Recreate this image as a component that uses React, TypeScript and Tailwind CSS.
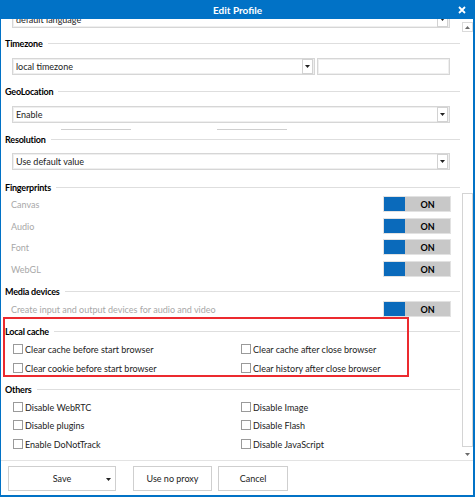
import React from "react";

const font = { fontFamily: "Lato, 'Noto Sans', sans-serif" };

function Arrow() {
  return (
    <svg width="5" height="3" viewBox="0 0 5 3" className="block">
      <path d="M0 0 H5 L2.5 3 Z" fill="#222" />
    </svg>
  );
}

function DropBtn() {
  return (
    <div className="w-[11px] h-[15px] mr-[1px] border border-[#d2d2d2] bg-white flex items-center justify-center shrink-0">
      <Arrow />
    </div>
  );
}

function Select({ text, className = "" }: { text: string; className?: string }) {
  return (
    <div
      className={
        "h-[17px] border border-[#d6d6d6] shadow-[inset_0_0_0_1px_#efefef] bg-white flex items-center pl-[3px] " +
        className
      }
    >
      <span className="flex-1 text-[9px] text-[#222] leading-none">{text}</span>
      <DropBtn />
    </div>
  );
}

function Header({ title, className = "" }: { title: string; className?: string }) {
  return (
    <div className={"h-[16px] flex items-center pl-[4px] pr-[2px] " + className}>
      <span className="text-[9px] font-bold text-black leading-none tracking-[-0.2px]">{title}</span>
      <div className="flex-1 h-px bg-[#dedede] ml-[5px]" />
    </div>
  );
}

function Switch() {
  return (
    <div className="flex h-[16px] w-[68px] border border-[#e2e2e2]">
      <div className="w-[21px] bg-[#0a6abb]" />
      <div className="flex-1 bg-[#c8c8c8] flex items-center justify-center text-[9px] font-bold text-black leading-none">
        ON
      </div>
    </div>
  );
}

function FpRow({ label, className = "" }: { label: string; className?: string }) {
  return (
    <div className={"h-[16px] flex items-center justify-between pl-[10px] pr-[11px] " + className}>
      <span className="text-[9px] text-[#a8a8a8] leading-none">{label}</span>
      <Switch />
    </div>
  );
}

function Check({ label }: { label: string }) {
  return (
    <div className="flex items-center gap-[2px] h-[14px]">
      <div className="w-[10px] h-[10px] border border-[#9a9a9a] bg-white shrink-0" />
      <span className="text-[9px] text-[#222] leading-none">{label}</span>
    </div>
  );
}

function CheckRow({ a, b, className = "" }: { a: string; b?: string; className?: string }) {
  return (
    <div className={"grid grid-cols-[228px_1fr] pl-[12px] " + className}>
      <Check label={a} />
      {b ? <Check label={b} /> : <div />}
    </div>
  );
}

function Button({ children, className = "" }: { children: React.ReactNode; className?: string }) {
  return (
    <div
      className={
        "h-[25px] border border-[#cfcfcf] bg-white flex items-center justify-center text-[9px] text-[#222] " +
        className
      }
    >
      {children}
    </div>
  );
}

export default function App() {
  return (
    <div className="w-[475px] h-[497px] flex flex-col bg-[#0172c6]" style={font}>
      {/* title bar */}
      <div className="h-[19px] grid grid-cols-[1fr_auto_1fr] items-center">
        <div />
        <span className="text-[10px] font-bold text-white leading-none">Edit Profile</span>
        <div className="flex justify-end pr-[9px]">
          <svg width="8" height="8" viewBox="0 0 8 8">
            <path d="M1 1 L7 7 M7 1 L1 7" stroke="#fff" strokeWidth="1.8" />
          </svg>
        </div>
      </div>

      <div className="flex-1 flex flex-col ml-[1px] mr-[2px] mb-[2px] bg-white">
        <div className="h-[441px] flex">
          {/* content */}
          <div className="flex-1 flex flex-col overflow-hidden">
            <div className="h-[9px] overflow-hidden pl-[11px] pr-[12px]">
              <Select text="default language" className="-mt-[8px]" />
            </div>

            <Header title="Timezone" className="mt-[7px]" />
            <div className="mt-[7px] flex gap-[2px] pl-[11px] pr-[12px]">
              <Select text="local timezone" className="w-[303px]" />
              <div className="flex-1 h-[17px] border border-[#d6d6d6] shadow-[inset_0_0_0_1px_#efefef] bg-white" />
            </div>

            <Header title="GeoLocation" className="mt-[8px]" />
            <div className="mt-[7px] pl-[11px] pr-[12px]">
              <Select text="Enable" />
            </div>
            <div className="mt-[6px] h-px flex">
              <div className="ml-[60px] w-[70px] bg-[#cfcfcf]" />
              <div className="ml-[86px] w-[70px] bg-[#cfcfcf]" />
            </div>

            <Header title="Resolution" className="mt-[1px]" />
            <div className="mt-[6px] pl-[11px] pr-[12px]">
              <Select text="Use default value" />
            </div>

            <Header title="Fingerprints" className="mt-[9px]" />
            <FpRow label="Canvas" className="mt-[1px]" />
            <FpRow label="Audio" className="mt-[6px]" />
            <FpRow label="Font" className="mt-[5px]" />
            <FpRow label="WebGL" className="mt-[6px]" />

            <Header title="Media devices" className="mt-[6px]" />
            <FpRow label="Create input and output devices for audio and video" className="mt-[2px]" />

            <div className="relative mt-[4px] flex flex-col">
              <div className="absolute left-[2px] top-[-4px] w-[406px] h-[60px] border-2 border-[#ec2a2f] pointer-events-none" />
              <Header title="Local cache" className="mt-[2px]" />
              <CheckRow
                a="Clear cache before start browser"
                b="Clear cache after close browser"
                className="mt-[3px]"
              />
              <CheckRow
                a="Clear cookie before start browser"
                b="Clear history after close browser"
                className="mt-[5px]"
              />
            </div>

            <Header title="Others" className="mt-[6px]" />
            <CheckRow a="Disable WebRTC" b="Disable Image" className="mt-[3px]" />
            <CheckRow a="Disable plugins" b="Disable Flash" className="mt-[4px]" />
            <CheckRow a="Enable DoNotTrack" b="Disable JavaScript" className="mt-[5px]" />
          </div>

          {/* scrollbar */}
          <div className="w-[11px] flex flex-col items-stretch">
            <div className="mt-[3px] h-[10px] border border-[#dadada] flex items-center justify-center">
              <svg width="5" height="3" viewBox="0 0 5 3">
                <path d="M0 3 H5 L2.5 0 Z" fill="#6b6b6b" />
              </svg>
            </div>
            <div className="mt-[161px] h-[254px] border border-[#d4d4d4] bg-white" />
            <div className="mt-[3px] h-[8px] flex items-center justify-center">
              <svg width="5" height="3" viewBox="0 0 5 3">
                <path d="M0 0 H5 L2.5 3 Z" fill="#6b6b6b" />
              </svg>
            </div>
          </div>
        </div>

        <div className="h-px bg-[#e3e3e3]" />

        <div className="flex-1 flex items-start pt-[5px] pl-[7px] gap-0">
          <Button className="w-[108px] relative">
            <span>Save</span>
            <span className="absolute right-[4px] top-[11px]">
              <Arrow />
            </span>
          </Button>
          <Button className="w-[79px] ml-[17px]">Use no proxy</Button>
          <Button className="w-[70px] ml-[6px]">Cancel</Button>
        </div>
      </div>
    </div>
  );
}
